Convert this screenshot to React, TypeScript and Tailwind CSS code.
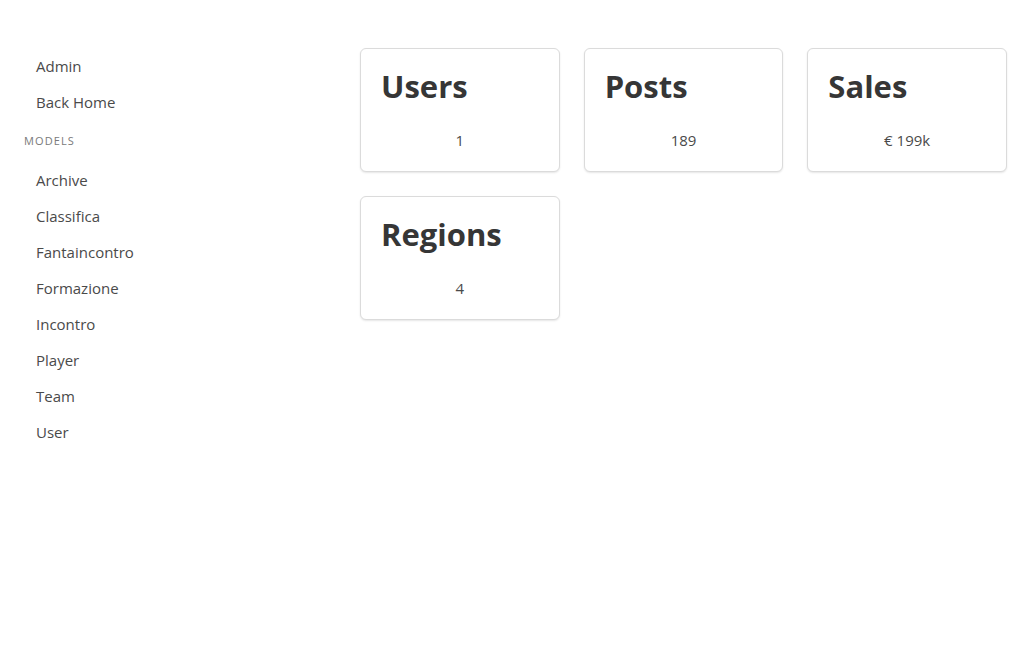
import React from 'react';

const links = ['Archive', 'Classifica', 'Fantaincontro', 'Formazione', 'Incontro', 'Player', 'Team', 'User'];

const stats = [
  { title: 'Users', value: '1' },
  { title: 'Posts', value: '189' },
  { title: 'Sales', value: '€ 199k' },
  { title: 'Regions', value: '4' },
];

function StatCard({ title, value }: { title: string; value: string }) {
  return (
    <div className="bg-white rounded-md border border-[#dbdbdb] shadow-[0_1px_2px_rgba(10,10,10,0.1)] px-5 pt-[19px] pb-[19px]">
      <h2 className="text-[31px] leading-9 font-bold text-[#363636]">{title}</h2>
      <p className="mt-6 text-[15px] leading-6 text-[#4a4a4a] text-center">{value}</p>
    </div>
  );
}

export default function App() {
  return (
    <div className="min-h-screen bg-white flex" style={{ fontFamily: '"Open Sans", "Noto Sans", sans-serif' }}>
      {/* Sidebar menu */}
      <aside className="w-[360px] shrink-0 pt-12 pl-6">
        <ul>
          <li className="h-9 flex items-center px-3 text-[15px] text-[#4a4a4a]">Admin</li>
          <li className="h-9 flex items-center px-3 text-[15px] text-[#4a4a4a]">Back Home</li>
        </ul>
        <p className="h-[42px] flex items-center text-[11px] uppercase tracking-[0.1em] text-[#7a7a7a]">Models</p>
        <ul>
          {links.map((l) => (
            <li key={l} className="h-9 flex items-center px-3 text-[15px] text-[#4a4a4a]">
              {l}
            </li>
          ))}
        </ul>
      </aside>

      {/* Dashboard cards */}
      <main className="flex-1 pt-12 pr-6">
        <div className="grid grid-cols-3 gap-6">
          {stats.map((s) => (
            <StatCard key={s.title} title={s.title} value={s.value} />
          ))}
        </div>
      </main>
    </div>
  );
}
